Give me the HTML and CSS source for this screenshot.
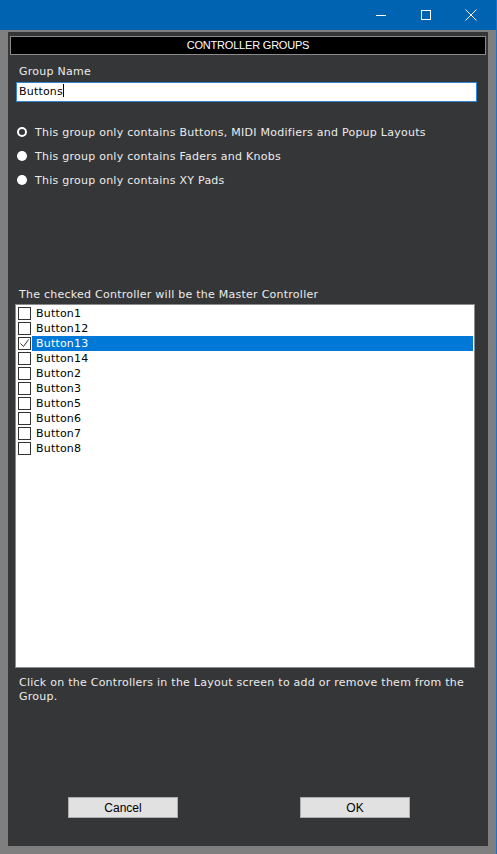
FILE: index.html
```html
<!DOCTYPE html>
<html lang="en">
<head>
  <meta charset="UTF-8" />
  <title>Controller Groups</title>
  <link rel="stylesheet" href="styles.css">
</head>
<body>
  <div class="window">
    <!-- Title bar with window controls -->
    <div class="titlebar">
      <span class="tb-btn">
        <svg width="12" height="12" viewBox="0 0 12 12"><path d="M1 6.5h10" stroke="#fff" stroke-width="1"/></svg>
      </span>
      <span class="tb-btn">
        <svg width="12" height="12" viewBox="0 0 12 12"><rect x="1.5" y="1.5" width="9" height="9" fill="none" stroke="#fff" stroke-width="1"/></svg>
      </span>
      <span class="tb-btn">
        <svg width="12" height="12" viewBox="0 0 12 12"><path d="M0.5 0.5l11 11M11.5 0.5l-11 11" stroke="#fff" stroke-width="1"/></svg>
      </span>
    </div>

    <div class="frame">
      <div class="panel">
        <div class="heading">CONTROLLER GROUPS</div>

        <label class="label name-label" for="groupName">Group Name</label>
        <div class="name-input" id="groupName">Buttons<span class="caret"></span></div>

        <ul class="radios">
          <li><span class="radio ring"></span>This group only contains Buttons, MIDI Modifiers and Popup Layouts</li>
          <li><span class="radio"></span>This group only contains Faders and Knobs</li>
          <li><span class="radio"></span>This group only contains XY Pads</li>
        </ul>

        <div class="label list-label">The checked Controller will be the Master Controller</div>
        <ul class="listbox">
          <li><span class="check"></span><span class="item">Button1</span></li>
          <li><span class="check"></span><span class="item">Button12</span></li>
          <li class="selected"><span class="check checked">
            <svg width="11" height="11" viewBox="0 0 11 11"><path d="M1.5 5.5l3 3 5-7" fill="none" stroke="#333" stroke-width="1"/></svg>
          </span><span class="item">Button13</span></li>
          <li><span class="check"></span><span class="item">Button14</span></li>
          <li><span class="check"></span><span class="item">Button2</span></li>
          <li><span class="check"></span><span class="item">Button3</span></li>
          <li><span class="check"></span><span class="item">Button5</span></li>
          <li><span class="check"></span><span class="item">Button6</span></li>
          <li><span class="check"></span><span class="item">Button7</span></li>
          <li><span class="check"></span><span class="item">Button8</span></li>
        </ul>

        <p class="label hint">Click on the Controllers in the Layout screen to add or remove them from the Group.</p>

        <div class="actions">
          <button type="button" class="btn">Cancel</button>
          <button type="button" class="btn">OK</button>
        </div>
      </div>
    </div>
  </div>
</body>
</html>
```

FILE: styles.css
```css
/* Dialog window */
body {
  margin: 0;
  padding: 0;
  background-color: #7f7f7f;
  font-family: "DejaVu Sans", Verdana, sans-serif;
}

.window {
  width: 497px;
  height: 854px;
  display: flex;
  flex-direction: column;
  box-sizing: border-box;
  border-right: 1px solid #1a73c9;
}

.titlebar {
  height: 30px;
  background-color: #0063b1;
  display: flex;
  justify-content: flex-end;
  align-items: center;
  padding-right: 3px;
}

.tb-btn {
  width: 45px;
  height: 30px;
  display: flex;
  align-items: center;
  justify-content: center;
}

.frame {
  flex: 1;
  background-color: #7f7f7f;
  padding: 2px 8px 8px 8px;
  display: flex;
}

.panel {
  flex: 1;
  background-color: #353638;
  display: flex;
  flex-direction: column;
  padding: 4px 2px 0 2px;
}

.heading {
  height: 17px;
  background-color: #000;
  border: 1px solid #8a8a8a;
  color: #fff;
  font-family: "Liberation Sans", Arial, sans-serif;
  font-size: 11px;
  letter-spacing: -0.2px;
  line-height: 17px;
  text-align: center;
}

.label {
  color: #ececec;
  font-size: 11px;
  letter-spacing: 0.25px;
}

.name-label {
  margin: 10px 0 0 9px;
  line-height: 14px;
}

.name-input {
  margin: 3px 9px 0 6px;
  height: 18px;
  background-color: #fff;
  border: 1px solid #2f86d3;
  color: #000;
  font-size: 11px;
  letter-spacing: 0.2px;
  line-height: 18px;
  padding-left: 2px;
}

.caret {
  display: inline-block;
  width: 1px;
  height: 13px;
  background-color: #000;
  vertical-align: -2px;
}

.radios {
  list-style: none;
  margin: 18px 0 0 0;
  padding: 0 0 0 7px;
}

.radios li {
  display: flex;
  align-items: center;
  height: 24px;
  color: #ececec;
  font-size: 11px;
  letter-spacing: 0.25px;
}

.radio {
  width: 10px;
  height: 10px;
  border-radius: 50%;
  background-color: #fff;
  margin-right: 8px;
  box-sizing: border-box;
}

.radio.ring {
  background-color: #353638;
  border: 2px solid #fff;
}

.list-label {
  margin: 96px 0 0 9px;
  line-height: 14px;
}

.listbox {
  list-style: none;
  margin: 2px 11px 0 5px;
  padding: 1px 1px 0 2px;
  height: 361px;
  background-color: #fff;
  border: 1px solid #8c8c8c;
}

.listbox li {
  height: 15px;
  display: flex;
  align-items: center;
  font-size: 11px;
  letter-spacing: 0.2px;
  color: #000;
}

.check {
  width: 13px;
  height: 13px;
  box-sizing: border-box;
  border: 1px solid #333;
  background-color: #fff;
  margin-right: 1px;
  display: flex;
  align-items: center;
  justify-content: center;
}

.item {
  flex: 1;
  height: 15px;
  line-height: 15px;
  padding-left: 4px;
}

.selected .item {
  background-color: #0078d7;
  color: #fff;
}

.hint {
  margin: 8px 12px 0 9px;
  line-height: 14px;
}

.actions {
  margin-top: auto;
  margin-bottom: 28px;
  display: flex;
  padding-left: 58px;
  gap: 122px;
}

.btn {
  width: 110px;
  height: 21px;
  background-color: #e1e1e1;
  border: 1px solid #adadad;
  border-radius: 0;
  color: #000;
  font-family: "Liberation Sans", Arial, sans-serif;
  font-size: 12px;
  padding: 0;
}
```
